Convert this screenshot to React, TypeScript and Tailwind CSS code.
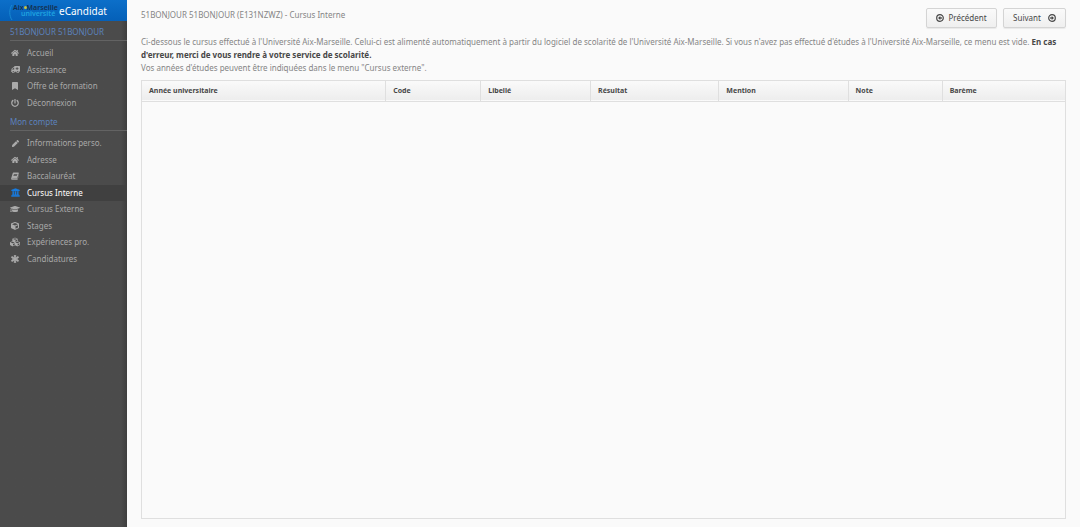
import type { IconType } from 'react-icons';
import {
  FaAmbulance,
  FaAsterisk,
  FaBookmark,
  FaCube,
  FaCubes,
  FaGraduationCap,
  FaHome,
  FaPen,
  FaPowerOff,
  FaUniversity,
} from 'react-icons/fa';

type Item = { label: string; icon: IconType; size?: string; active?: boolean };

const SlantedBook: IconType = ({ className }) => (
  <svg className={className} viewBox="0 0 16 16" fill="currentColor" aria-hidden="true">
    <path d="M5 1h9.5c1 0 1.4.7 1.1 1.6l-2.9 9.2c-.2.7-.7 1-1.4 1H3.1c-.7 0-.8.9 0 .9h9.3c.5 0 .8-.2 1-.7L16 5c.2.4.2.8 0 1.3l-2.6 8c-.2.7-.8 1.2-1.5 1.2H2.5C.9 15.5 0 14 .4 12.7L3.4 2.4C3.7 1.5 4.2 1 5 1zm.9 3-.4 1.3h7l.4-1.3zm-.8 2.7-.4 1.3h7l.4-1.3z" />
  </svg>
);

const mainItems: Item[] = [
  { label: 'Accueil', icon: FaHome },
  { label: 'Assistance', icon: FaAmbulance, size: 'size-[9px] -scale-x-100' },
  { label: 'Offre de formation', icon: FaBookmark },
  { label: 'Déconnexion', icon: FaPowerOff },
];

const accountItems: Item[] = [
  { label: 'Informations perso.', icon: FaPen, size: 'size-[7px]' },
  { label: 'Adresse', icon: FaHome },
  { label: 'Baccalauréat', icon: SlantedBook },
  { label: 'Cursus Interne', icon: FaUniversity, size: 'size-[9px] stroke-current stroke-[20px]', active: true },
  { label: 'Cursus Externe', icon: FaGraduationCap, size: 'size-[10px]' },
  { label: 'Stages', icon: FaCube },
  { label: 'Expériences pro.', icon: FaCubes, size: 'size-[10px]' },
  { label: 'Candidatures', icon: FaAsterisk, size: 'size-2 stroke-current stroke-[50px]' },
];

const columns = [
  { label: 'Année universitaire', width: 'w-[26.4%]' },
  { label: 'Code', width: 'w-[10.3%]' },
  { label: 'Libellé', width: 'w-[11.9%]' },
  { label: 'Résultat', width: 'w-[13.9%]' },
  { label: 'Mention', width: 'w-[14%]' },
  { label: 'Note', width: 'w-[10.2%]' },
  { label: 'Barème', width: 'w-[13.3%]' },
];

function Logo() {
  return (
    <span className="relative flex h-5 w-[47px] flex-col pt-1 pl-1 text-[7px] leading-[6px] font-semibold">
      <svg className="absolute top-1 left-0 h-4 w-1" viewBox="0 0 4 16" fill="none" aria-hidden="true">
        <path d="M3 0C0 4 0 11 3 15" stroke="#1e93d6" strokeWidth="0.8" />
      </svg>
      <span className="flex items-center text-[#15304f]">
        Aix
        <svg className="size-[3px] shrink-0" viewBox="0 0 4 4" aria-hidden="true">
          <circle cx="2" cy="2" r="2" fill="#c9c33c" />
        </svg>
        Marseille
      </span>
      <span className="pl-2 text-[#1fa3e0]">université</span>
    </span>
  );
}

function ArrowCircle({ left }: { left?: boolean }) {
  return (
    <svg className={left ? 'size-2 -scale-x-100' : 'size-2'} viewBox="0 0 16 16" fill="none" stroke="currentColor" aria-hidden="true">
      <circle cx="8" cy="8" r="6.6" strokeWidth="2.4" />
      <path d="M4.2 8h4.5" strokeWidth="2.8" />
      <path d="M7.4 4.2L12 8l-4.6 3.8z" fill="currentColor" stroke="none" />
    </svg>
  );
}

function Menu({ items, className }: { items: Item[]; className: string }) {
  return (
    <ul className={`grid auto-rows-fr ${className}`}>
      {items.map(({ label, icon: Icon, size = 'size-2', active }) => (
        <li key={label} className={active ? 'bg-[#404040]' : ''}>
          <a
            href="#"
            className={`flex h-full items-center pl-[10px] whitespace-nowrap ${active ? 'text-white' : 'text-[#a8a8a8]'}`}
          >
            <span className={`flex w-[10px] justify-center ${active ? 'text-[#197de1]' : 'text-[#aaa]'}`}>
              <Icon className={`shrink-0 ${size}`} />
            </span>
            <span className="pl-[7px]">{label}</span>
          </a>
        </li>
      ))}
    </ul>
  );
}

function Section({ title }: { title: string }) {
  return (
    <div className="pt-1 pb-1">
      <h2 className="ml-[10px] border-b border-[#636363] pb-px leading-[14px] text-[#5b82bd]">{title}</h2>
    </div>
  );
}

const buttonStyle =
  'flex h-5 items-center justify-center rounded-[2px] border border-[#d4d4d4] bg-linear-to-b from-[#fafafa] to-[#efefef] leading-3 text-[#474747] shadow-[0_1px_1px_rgba(0,0,0,0.07)]';

export default function App() {
  return (
    <div className="flex min-h-screen bg-[#fafafa] font-['Noto_Sans','Open_Sans',sans-serif] text-[8px] leading-[13px] text-[#858585]">
      <aside className="w-[127px] shrink-0 bg-[#4b4b4b] bg-linear-to-l from-[#3e3e3e] to-[#4b4b4b] to-[6px] leading-3">
        <div className="flex h-[21px] items-center bg-linear-to-b from-[#0c6fc9] to-[#0560b8] pl-[9px] text-white">
          <Logo />
          <span className="pl-[3px] text-[10px] whitespace-nowrap">eCandidat</span>
        </div>
        <nav>
          <Section title="51BONJOUR 51BONJOUR" />
          <Menu items={mainItems} className="h-[66px]" />
          <Section title="Mon compte" />
          <Menu items={accountItems} className="h-[132px]" />
        </nav>
      </aside>

      <main className="flex min-w-0 grow flex-col px-[14px] pt-2 pb-2">
        <header className="flex h-[27px] items-start justify-between">
          <h1>51BONJOUR 51BONJOUR (E131NZWZ) - Cursus Interne</h1>
          <div className="flex gap-[6px]">
            <button type="button" className={`${buttonStyle} w-[71px] gap-1`}>
              <ArrowCircle left />
              Précédent
            </button>
            <button type="button" className={`${buttonStyle} w-[63px] gap-[7px]`}>
              Suivant
              <ArrowCircle />
            </button>
          </div>
        </header>

        <p>
          Ci-dessous le cursus effectué à l'Université Aix-Marseille. Celui-ci est alimenté automatiquement à partir du
          logiciel de scolarité de l'Université Aix-Marseille. Si vous n'avez pas effectué d'études à l'Université
          Aix-Marseille, ce menu est vide.{' '}
          <b className="font-bold text-[#474747]">
            En cas d'erreur, merci de vous rendre à votre service de scolarité.
          </b>
          <br />
          Vos années d'études peuvent être indiquées dans le menu "Cursus externe".
        </p>

        <div className="mt-[6px] grow border border-[#dfdfdf]">
          <table className="w-full table-fixed border-collapse text-[7px]">
            <thead>
              <tr className="h-5 border-b border-[#dfdfdf] bg-linear-to-b from-[#fafafa] to-[#ededed]">
                {columns.map((column) => (
                  <th
                    key={column.label}
                    scope="col"
                    className={`${column.width} border-r border-[#dfdfdf] pl-[7px] text-left font-bold text-[#474747] last:border-r-0`}
                  >
                    {column.label}
                  </th>
                ))}
              </tr>
            </thead>
          </table>
        </div>
      </main>
    </div>
  );
}
